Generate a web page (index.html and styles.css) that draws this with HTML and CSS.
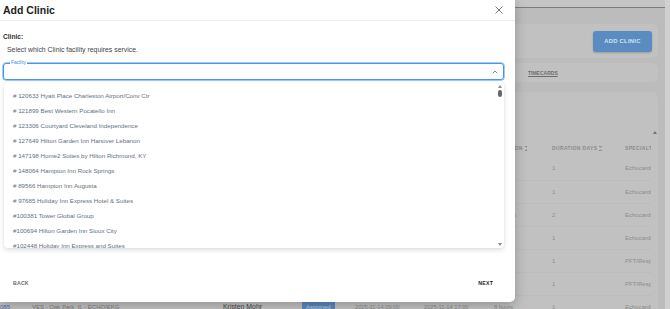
FILE: index.html
```html
<!DOCTYPE html>
<html lang="en">
<head>
    <meta charset="UTF-8">
    <meta name="viewport" content="width=device-width, initial-scale=1.0">
    <title>Add Clinic</title>
    <link rel="stylesheet" href="styles.css">
</head>
<body>
    <div class="page">
        <div class="content">
            <div class="topbar"></div>
            <div class="main">
                <div class="card actions">
                    <button class="btn-add">ADD CLINIC</button>
                </div>
                <div class="card tabs">
                    <span class="tab">CLINICS</span>
                    <span class="tab">TECHNICIANS</span>
                    <span class="tab">SCHEDULE</span>
                    <span class="tab">REQUESTS</span>
                    <span class="tab">INVOICES</span>
                    <span class="tab active">TIMECARDS</span>
                </div>
                <div class="card table-card">
                    <div class="table-scroll">
                        <div class="table-wrap">
                            <table>
                                <colgroup>
                                    <col class="c-id"><col class="c-loc"><col class="c-tech"><col class="c-status">
                                    <col class="c-start"><col class="c-end"><col class="c-dur"><col class="c-days"><col class="c-spec">
                                </colgroup>
                                <thead>
                                    <tr>
                                        <th>ID</th>
                                        <th>LOCATION <span class="sort"></span></th>
                                        <th>TECHNICIAN</th>
                                        <th>STATUS</th>
                                        <th>START <span class="sort"></span></th>
                                        <th>END <span class="sort"></span></th>
                                        <th>DURATION <span class="sort"></span></th>
                                        <th>DURATION DAYS <span class="sort"></span></th>
                                        <th>SPECIALTY</th>
                                    </tr>
                                </thead>
                                <tbody>
                                    <tr>
                                        <td class="id">079</td><td class="loc">VES - Chicago, IL - ECHO/EKG</td><td class="tech">Kristen Mohr</td>
                                        <td><span class="badge">Assigned</span></td><td class="date">2025-11-10 09:00</td><td class="date">2025-11-10 17:00</td>
                                        <td class="date">8 hours</td><td class="num">1</td><td class="spec">Echocardiography</td>
                                    </tr>
                                    <tr>
                                        <td class="id">080</td><td class="loc">VES - Joliet, IL - ECHO/EKG</td><td class="tech">Kristen Mohr</td>
                                        <td><span class="badge">Assigned</span></td><td class="date">2025-11-11 09:00</td><td class="date">2025-11-11 17:00</td>
                                        <td class="date">8 hours</td><td class="num">1</td><td class="spec">Echocardiography</td>
                                    </tr>
                                    <tr>
                                        <td class="id">081</td><td class="loc">VES - Aurora, IL - ECHO/EKG</td><td class="tech">Kristen Mohr</td>
                                        <td><span class="badge">Assigned</span></td><td class="date">2025-11-12 09:00</td><td class="date">2025-11-13 17:00</td>
                                        <td class="date">16 hours</td><td class="num">2</td><td class="spec">Echocardiography</td>
                                    </tr>
                                    <tr>
                                        <td class="id">082</td><td class="loc">VES - Elgin, IL - ECHO/EKG</td><td class="tech">Kristen Mohr</td>
                                        <td><span class="badge">Assigned</span></td><td class="date">2025-11-13 09:00</td><td class="date">2025-11-13 17:00</td>
                                        <td class="date">8 hours</td><td class="num">1</td><td class="spec">Echocardiography</td>
                                    </tr>
                                    <tr>
                                        <td class="id">083</td><td class="loc">VES - Naperville, IL - PFT</td><td class="tech">Kristen Mohr</td>
                                        <td><span class="badge">Assigned</span></td><td class="date">2025-11-13 09:00</td><td class="date">2025-11-13 17:00</td>
                                        <td class="date">8 hours</td><td class="num">1</td><td class="spec">PFT/Respiratory</td>
                                    </tr>
                                    <tr>
                                        <td class="id">084</td><td class="loc">VES - Evanston, IL - PFT</td><td class="tech">Kristen Mohr</td>
                                        <td><span class="badge">Assigned</span></td><td class="date">2025-11-14 09:00</td><td class="date">2025-11-14 17:00</td>
                                        <td class="date">8 hours</td><td class="num">1</td><td class="spec">PFT/Respiratory</td>
                                    </tr>
                                    <tr>
                                        <td class="id">085</td><td class="loc">VES - Oak Park, IL - ECHO/EKG</td><td class="tech">Kristen Mohr</td>
                                        <td><span class="badge">Assigned</span></td><td class="date">2025-11-14 09:00</td><td class="date">2025-11-14 17:00</td>
                                        <td class="date">8 hours</td><td class="num">1</td><td class="spec">Echocardiography</td>
                                    </tr>
                                </tbody>
                            </table>
                        </div>
                        <div class="vbar"><span class="tri-up"></span></div>
                    </div>
                </div>
            </div>
        </div>
        <div class="page-scroll"></div>
    </div>

    <div class="modal">
        <div class="modal-header">
            <h2>Add Clinic</h2>
            <button class="close" aria-label="Close">
                <svg width="8" height="8" viewBox="0 0 8 8"><path d="M0.5 0.5L7.5 7.5M7.5 0.5L0.5 7.5" stroke="#666" stroke-width="0.9" fill="none"/></svg>
            </button>
        </div>
        <div class="modal-body">
            <div class="field-label">Clinic:</div>
            <p class="hint">Select which Clinic facility requires service.</p>
            <div class="select">
                <span class="legend">Facility</span>
                <svg class="chevron" width="6" height="4" viewBox="0 0 6 4"><path d="M0.8 3.2L3 1L5.2 3.2" stroke="#777" stroke-width="0.9" fill="none"/></svg>
            </div>
            <div class="listbox">
                <ul class="options">
                    <li># 120633 Hyatt Place Charleston Airport/Conv Ctr</li>
                    <li># 121899 Best Western Pocatello Inn</li>
                    <li># 123306 Courtyard Cleveland Independence</li>
                    <li># 127649 Hilton Garden Inn Hanover Lebanon</li>
                    <li># 147198 Home2 Suites by Hilton Richmond, KY</li>
                    <li># 148064 Hampton Inn Rock Springs</li>
                    <li># 89566 Hampton Inn Augusta</li>
                    <li># 97685 Holiday Inn Express Hotel &amp; Suites</li>
                    <li>#100381 Tower Global Group</li>
                    <li>#100694 Hilton Garden Inn Sioux City</li>
                    <li>#102448 Holiday Inn Express and Suites</li>
                    <li>#103115 Courtyard Marriott Downtown</li>
                </ul>
                <div class="lb-scroll">
                    <span class="tri-up"></span>
                    <span class="thumb"></span>
                    <span class="tri-down"></span>
                </div>
            </div>
        </div>
        <div class="modal-footer">
            <button class="text-btn back">BACK</button>
            <button class="text-btn next">NEXT</button>
        </div>
    </div>
</body>
</html>
```

FILE: styles.css
```css
* {
    box-sizing: border-box;
}
html, body {
    margin: 0;
    height: 100%;
    overflow: hidden;
}
body {
    font-family: "Liberation Sans", Arial, sans-serif;
    background-color: #bcbcbc;
    color: #333;
    position: relative;
}
button {
    font-family: inherit;
    border: none;
    background: none;
    padding: 0;
    cursor: pointer;
}

/* page behind the dialog (already dimmed by the backdrop) */
.page {
    display: flex;
    height: 100%;
}
.content {
    flex: 1;
    min-width: 0;
    display: flex;
    flex-direction: column;
}
.topbar {
    flex-shrink: 0;
    height: 8px;
    background-color: #c5c5c5;
    border-bottom: 1px solid #7c7c7c;
}
.page-scroll {
    width: 5px;
    flex-shrink: 0;
    background-color: #d0d0d0;
}
.main {
    padding: 16px 7px 0 0;
    display: flex;
    flex-direction: column;
    flex: 1;
    min-height: 0;
    overflow: hidden;
}
.card {
    flex-shrink: 0;
    background-color: #c1c1c1;
    border-radius: 0 6px 6px 0;
}
.actions {
    height: 34px;
    display: flex;
    justify-content: flex-end;
    align-items: center;
    padding-right: 6px;
}
.btn-add {
    width: 59px;
    height: 21px;
    border-radius: 3px;
    background-color: #5a8cc2;
    color: #d6e2ef;
    font-weight: bold;
    font-size: 5.8px;
    letter-spacing: 0.3px;
    box-shadow: 0 1px 2px rgba(0, 0, 0, 0.2);
}
.tabs {
    margin-top: 5px;
    height: 19px;
    display: flex;
    align-items: center;
    padding-left: 48px;
}
.tab {
    width: 96px;
    flex-shrink: 0;
    font-size: 5px;
    font-weight: bold;
    color: #6d6d6d;
}
.tab.active {
    text-decoration: underline;
}
.table-card {
    margin-top: 10px;
    flex: 1 1 auto;
    min-height: 0;
    overflow: hidden;
    padding-top: 36px;
    border-radius: 0 6px 0 0;
}
.table-scroll {
    display: flex;
}
.table-wrap {
    flex: 1;
    min-width: 0;
    overflow: hidden;
    padding-top: 11px;
}
.vbar {
    width: 7px;
    flex-shrink: 0;
    display: flex;
    justify-content: center;
    padding-top: 3px;
}
.vbar .tri-up {
    border-bottom-color: #727272;
}
table {
    border-collapse: collapse;
    table-layout: fixed;
    width: 725px;
}
.c-id { width: 32px; }
.c-loc { width: 191px; }
.c-tech { width: 79px; }
.c-status { width: 53px; }
.c-start { width: 69px; }
.c-end { width: 70px; }
.c-dur { width: 58px; }
.c-days { width: 73px; }
.c-spec { width: 100px; }
th, td {
    padding: 0;
    text-align: left;
    white-space: nowrap;
    overflow: hidden;
}
th {
    height: 18px;
    font-size: 5px;
    font-weight: bold;
    letter-spacing: 0.35px;
    color: #8b8b8b;
}
td {
    height: 23px;
    border-top: 1px solid #bcbcbc;
    font-size: 6px;
    color: #8c8c8c;
}
tbody tr:first-child td {
    border-top: none;
}
.sort {
    display: inline-block;
    width: 3px;
    height: 5px;
    vertical-align: -0.5px;
    background:
        linear-gradient(to top right, transparent 50%, #8b8b8b 50%) 0 0 / 1.5px 2px no-repeat,
        linear-gradient(to top left, transparent 50%, #8b8b8b 50%) 1.5px 0 / 1.5px 2px no-repeat,
        linear-gradient(to bottom right, transparent 50%, #8b8b8b 50%) 0 3px / 1.5px 2px no-repeat,
        linear-gradient(to bottom left, transparent 50%, #8b8b8b 50%) 1.5px 3px / 1.5px 2px no-repeat;
}
td.id {
    color: #4f6cb0;
}
td.loc {
    color: #7a7a7a;
}
td.tech {
    font-size: 6.9px;
    color: #474747;
}
td.date {
    font-size: 5.7px;
    color: #8a8a8a;
}
.badge {
    display: inline-block;
    padding: 0 4px;
    line-height: 10px;
    background-color: #5b86bb;
    color: #bccfe5;
}

/* small triangles used by the fake scrollbars */
.tri-up, .tri-down {
    display: block;
    width: 0;
    height: 0;
    border-left: 2px solid transparent;
    border-right: 2px solid transparent;
}
.tri-up {
    border-bottom: 3px solid #8a8a8a;
}
.tri-down {
    border-top: 3px solid #8a8a8a;
}

/* dialog */
.modal {
    position: absolute;
    top: 0;
    left: 0;
    width: 515px;
    height: 302px;
    background: #fff;
    border-radius: 0 0 5px 0;
    box-shadow: 0 3px 12px rgba(0, 0, 0, 0.25);
    display: flex;
    flex-direction: column;
}
.modal-header {
    height: 21px;
    border-bottom: 1px solid #ececec;
    display: flex;
    align-items: center;
    justify-content: space-between;
    padding: 0 12px 0 3px;
}
.modal-header h2 {
    margin: 0;
    font-size: 10.5px;
    font-weight: bold;
    color: #222;
}
.close {
    width: 8px;
    height: 8px;
    display: flex;
}
.modal-body {
    padding: 0 11px 0 3px;
}
.field-label {
    margin-top: 11px;
    line-height: 9px;
    font-size: 6.6px;
    font-weight: bold;
    color: #333;
}
.hint {
    margin: 4px 0 0 4px;
    line-height: 10px;
    font-size: 6.9px;
    color: #444;
}
.select {
    position: relative;
    margin-top: 8px;
    height: 17px;
    border: 1px solid #4797e6;
    box-shadow: 0 0 0 0.5px #4797e6;
    border-radius: 3px;
    display: flex;
    align-items: center;
    justify-content: flex-end;
    padding-right: 5px;
}
.legend {
    position: absolute;
    left: 6px;
    top: -4px;
    padding: 0 1px;
    background: #fff;
    font-size: 4.8px;
    line-height: 6px;
    color: #3d8ee0;
}
.listbox {
    margin: 2px 0 0 1px;
    height: 166px;
    background: #fff;
    border-radius: 3px;
    box-shadow: 0 2px 5px rgba(0, 0, 0, 0.13), 0 0 1px rgba(0, 0, 0, 0.12);
    display: flex;
    overflow: hidden;
}
.options {
    flex: 1;
    list-style: none;
    margin: 0;
    padding: 5.5px 0 0 9px;
}
.options li {
    height: 15px;
    line-height: 15px;
    font-size: 6.2px;
    color: #627080;
    white-space: nowrap;
}
.lb-scroll {
    width: 7px;
    margin-right: 1px;
    display: flex;
    flex-direction: column;
    align-items: center;
    padding: 3px 0 2px;
}
.lb-scroll .thumb {
    margin-top: 2px;
    width: 4px;
    height: 7px;
    border-radius: 2px;
    background-color: #686868;
}
.lb-scroll .tri-down {
    margin-top: auto;
}
.modal-footer {
    margin-top: auto;
    height: 38px;
    display: flex;
    align-items: center;
    justify-content: space-between;
    padding: 0 22px 0 13px;
}
.text-btn {
    font-size: 5.2px;
    font-weight: bold;
    letter-spacing: 0.2px;
}
.back {
    color: #6b6b6b;
}
.next {
    color: #1e1e1e;
}
```
